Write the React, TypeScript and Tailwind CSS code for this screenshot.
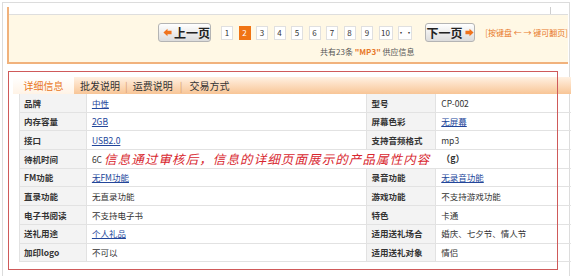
import React from 'react'

type Row = [string, string, boolean, string, string, boolean]

const ROWS: Row[] = [
  ['品牌', '中性', true, '型号', 'CP-002', false],
  ['内存容量', '2GB', true, '屏幕色彩', '无屏幕', true],
  ['接口', 'USB2.0', true, '支持音频格式', 'mp3', false],
  ['待机时间', '', false, '', '', false],
  ['FM功能', '无FM功能', true, '录音功能', '无录音功能', true],
  ['直录功能', '无直录功能', false, '游戏功能', '不支持游戏功能', false],
  ['电子书阅读', '不支持电子书', false, '特色', '卡通', false],
  ['送礼用途', '个人礼品', true, '适用送礼场合', '婚庆、七夕节、情人节', false],
  ['加印logo', '不可以', false, '适用送礼对象', '情侣', false],
]

const PAGES = ['1', '2', '3', '4', '5', '6', '7', '8', '9', '10', '··']

function Arrow({ dir }: { dir: 'left' | 'right' }) {
  return (
    <svg width="9" height="9" viewBox="0 0 10 10" className={dir === 'right' ? 'rotate-180 shrink-0' : 'shrink-0'}>
      <path d="M0.5 5 L5 0.8 L5 3 L9.5 3 L9.5 7 L5 7 L5 9.2 Z" fill="#f0731c" />
    </svg>
  )
}

function Value({ text, link }: { text: string; link: boolean }) {
  return link ? <span className="text-[#23469a] underline">{text}</span> : <span>{text}</span>
}

export default function App() {
  return (
    <div className="relative w-[575px] h-[276px] overflow-hidden bg-white p-[2px] font-['Noto_Sans_CJK_SC',sans-serif] text-[#333]">
      {/* outer frame */}
      <div className="w-[568px] h-[290px] border border-[#dcdcdc] pl-[4px] pt-[4px]">
        {/* pager panel */}
        <div className="w-[561px] border-l-2 border-b-2 border-[#f1b27c]">
          <div className="h-[7px] flex justify-end">
            <div className="w-px h-full bg-[#cfcfcf] mr-[17px]" />
          </div>
          <div className="h-[48px] border-t border-[#dedede] bg-[#fff8e5] pl-[149px] pt-[8px]">
            <div className="flex items-center h-[19px]">
              <button className="flex items-center gap-[2px] w-[54px] h-[19px] pl-[4px] rounded-[3px] border border-[#b4b4b4] bg-gradient-to-b from-white to-[#dcdcdc] text-[12px] font-bold text-[#222] leading-none whitespace-nowrap">
                <Arrow dir="left" />
                上一页
              </button>
              <div className="flex items-center gap-[5.5px] ml-[10px]">
                {PAGES.map((p) => (
                  <span
                    key={p}
                    className={
                      p === '2'
                        ? 'flex items-center justify-center w-[12px] h-[14px] bg-[#f07414] text-white text-[8px] leading-none'
                        : p === '10' || p === '··'
                        ? 'flex items-center justify-center w-[14px] h-[14px] bg-white border border-[#e0e0e0] text-[8px] text-[#333] leading-none whitespace-nowrap'
                        : 'flex items-center justify-center w-[12px] h-[14px] bg-white border border-[#e0e0e0] text-[8px] text-[#333] leading-none'
                    }
                  >
                    {p}
                  </span>
                ))}
              </div>
              <button className="flex items-center justify-center gap-[2px] w-[52px] h-[19px] ml-[13px] rounded-[3px] border border-[#b4b4b4] bg-gradient-to-b from-white to-[#dcdcdc] text-[12px] font-bold text-[#222] leading-none whitespace-nowrap">
                下一页
                <Arrow dir="right" />
              </button>
              <span className="ml-[10px] text-[8px] text-[#e8792a] whitespace-nowrap leading-none">[按键盘 ← → 键可翻页]</span>
            </div>
            <div className="mt-[6px] pl-[162px] text-[8px] text-[#555] leading-none whitespace-nowrap">
              共有23条 <span className="text-[#e8792a] font-bold">"MP3"</span> 供应信息
            </div>
          </div>
        </div>

        {/* detail panel */}
        <div className="ml-[6px] mt-[13px] w-[558px]">
          <div className="flex items-end h-[17px] bg-gradient-to-b from-[#fff1e2] to-[#f8c596] text-[10px] leading-none">
            <div className="flex items-center justify-center w-[61px] h-[17px] bg-gradient-to-b from-white to-[#fff3e6] text-[#e8771e]">详细信息</div>
            <div className="flex items-center h-[17px] text-[#333]">
              <span className="ml-[6px]">批发说明</span>
              <span className="mx-[5px] text-[#d9a070]">|</span>
              <span>运费说明</span>
              <span className="mx-[7px] text-[#d9a070]">|</span>
              <span>交易方式</span>
            </div>
          </div>
          <div className="ml-[6px] w-[552px] border-l border-[#e2e2e2] text-[8.5px] leading-none">
            {ROWS.map((r, i) =>
              i === 3 ? (
                <div key={i} className="flex h-[18.7px] border-b border-[#e2e2e2]">
                  <div className="flex items-center w-[67px] pl-[4px] bg-[#f3f3f3] border-r border-[#e2e2e2] font-bold">{r[0]}</div>
                  <div className="flex items-center w-[350px] pl-[5px] bg-white">
                    <span>6C</span>
                    <span className="ml-[2px] text-[12.5px] tracking-[1.1px] text-[#d8262e] italic whitespace-nowrap">信息通过审核后，信息的详细页面展示的产品属性内容</span>
                  </div>
                  <div className="flex items-center w-[135px] pl-[5px] font-bold text-[9px]">（g）</div>
                </div>
              ) : (
                <div key={i} className="flex h-[18.7px] border-b border-[#e2e2e2]">
                  <div className="flex items-center w-[67px] pl-[4px] bg-[#f3f3f3] border-r border-[#e2e2e2] font-bold">{r[0]}</div>
                  <div className="flex items-center w-[280px] pl-[5px]">
                    <Value text={r[1]} link={r[2]} />
                  </div>
                  <div className="flex items-center w-[70px] pl-[4px] bg-[#f3f3f3] border-x border-[#e2e2e2] font-bold">{r[3]}</div>
                  <div className="flex items-center w-[135px] pl-[5px]">
                    <Value text={r[4]} link={r[5]} />
                  </div>
                </div>
              )
            )}
          </div>
        </div>
      </div>

      {/* red annotation frame */}
      <div className="absolute left-[8px] top-[71px] w-[550px] h-[199px] border border-[#cf5a5a] pointer-events-none" />
    </div>
  )
}
